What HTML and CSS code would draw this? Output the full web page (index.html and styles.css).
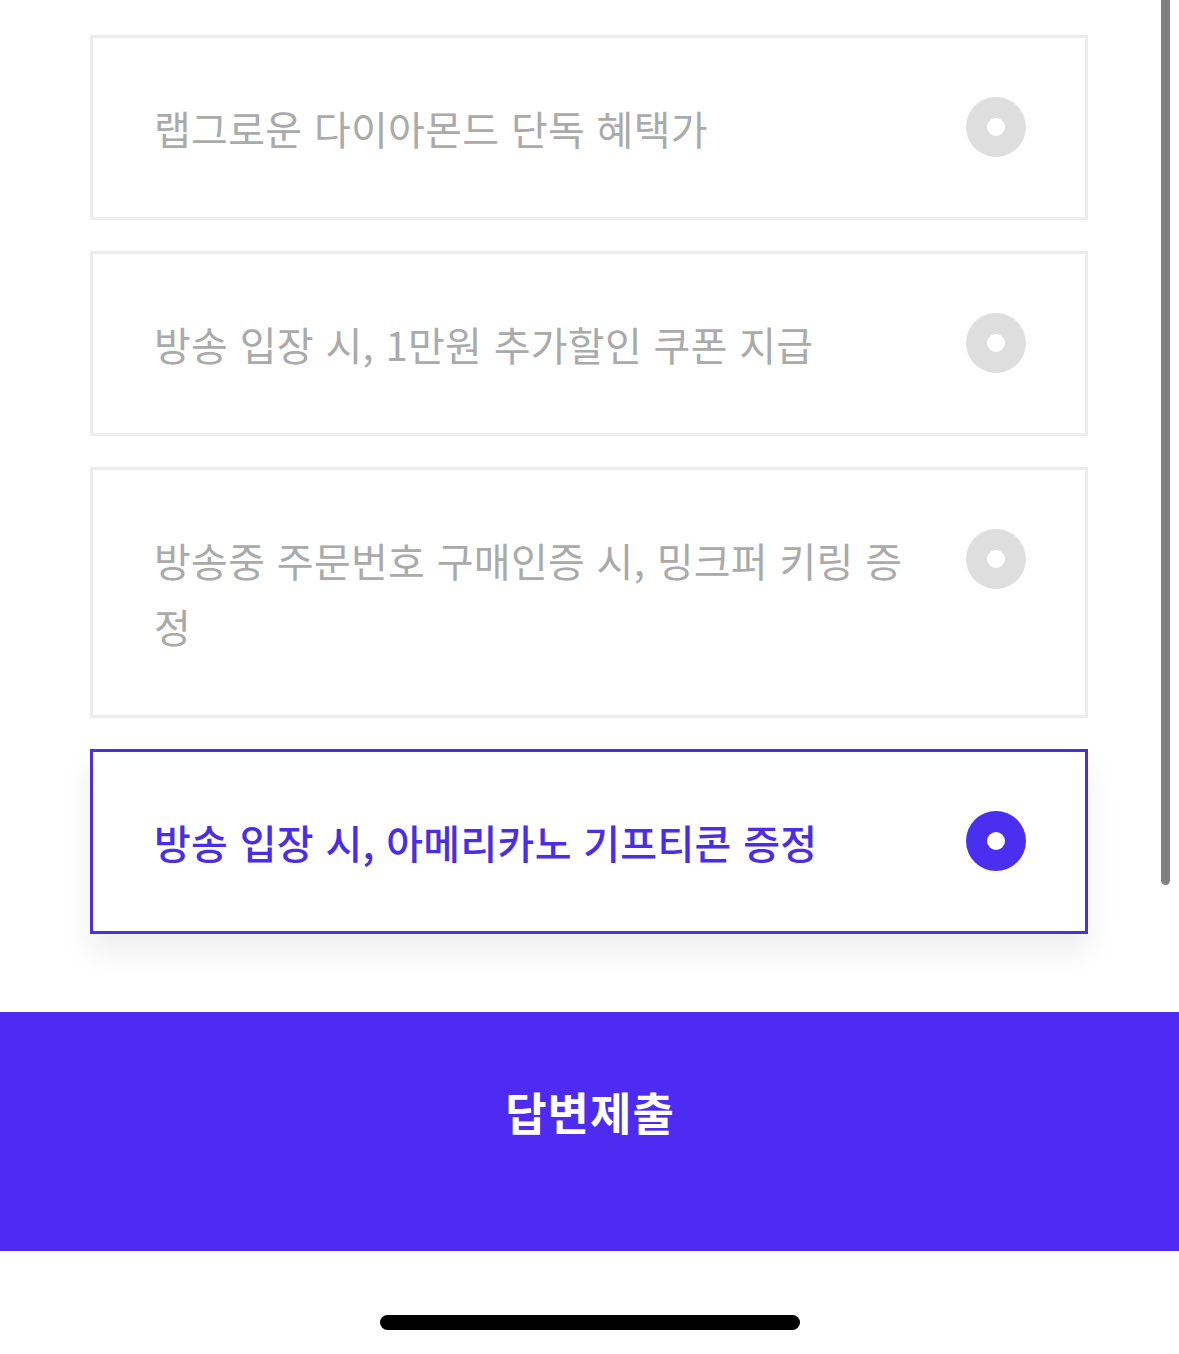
FILE: index.html
```html
<!DOCTYPE html>
<html lang="ko">
<head>
<meta charset="utf-8">
<title>답변제출</title>
<link rel="stylesheet" href="styles.css">
</head>
<body>
<div class="page">
  <ul class="options">
    <li class="option">
      <span class="label">랩그로운 다이아몬드 단독 혜택가</span>
      <span class="radio"></span>
    </li>
    <li class="option">
      <span class="label">방송 입장 시, 1만원 추가할인 쿠폰 지급</span>
      <span class="radio"></span>
    </li>
    <li class="option">
      <span class="label">방송중 주문번호 구매인증 시, 밍크퍼 키링 증정</span>
      <span class="radio"></span>
    </li>
    <li class="option selected">
      <span class="label">방송 입장 시, 아메리카노 기프티콘 증정</span>
      <span class="radio"></span>
    </li>
  </ul>
  <button class="submit">답변제출</button>
  <div class="home-area"><div class="home-indicator"></div></div>
</div>
<div class="scrollbar"></div>
</body>
</html>
```
FILE: styles.css
```css
html, body {
  margin: 0;
  padding: 0;
  background: #ffffff;
}
body {
  font-family: "Noto Sans CJK KR", "Noto Sans", sans-serif;
  width: 1179px;
  height: 1354px;
  overflow: hidden;
  position: relative;
}
.page {
  display: flex;
  flex-direction: column;
}
.options {
  list-style: none;
  margin: 0;
  padding: 35px 91px 0 90px;
  display: flex;
  flex-direction: column;
  gap: 31px;
}
.option {
  display: flex;
  align-items: flex-start;
  border: 3px solid #ececec;
  background: #fff;
  padding: 57px 59px 56px 61px;
}
.label {
  flex: 1;
  font-size: 40px;
  line-height: 66px;
  letter-spacing: 0.3px;
  color: #aaaaaa;
  font-weight: 400;
  padding-right: 40px;
}
.radio {
  flex: none;
  width: 60px;
  height: 60px;
  margin-top: 2px;
  border-radius: 50%;
  background: #dedede;
  display: flex;
  align-items: center;
  justify-content: center;
}
.radio::after {
  content: "";
  width: 18px;
  height: 18px;
  border-radius: 50%;
  background: #fff;
}
.option.selected {
  border-color: #4b31dc;
  box-shadow: 0 18px 30px rgba(0, 0, 0, 0.07);
}
.option.selected .label {
  color: #4a2de6;
  font-weight: 500;
}
.option.selected .radio {
  background: #4a2ff0;
}
.submit {
  margin-top: 78px;
  height: 239px;
  border: 0;
  background: #4d2bf3;
  color: #fff;
  font-family: "Noto Sans CJK KR", "Noto Sans", sans-serif;
  font-size: 45px;
  font-weight: 700;
  letter-spacing: 1px;
  padding: 0 0 40px 1px;
}
.home-area {
  height: 103px;
  display: flex;
  justify-content: center;
  align-items: flex-start;
}
.home-indicator {
  margin-top: 64px;
  width: 420px;
  height: 15px;
  border-radius: 8px;
  background: #000;
}
.scrollbar {
  position: absolute;
  top: 0;
  left: 1161px;
  width: 9px;
  height: 885px;
  border-radius: 0 0 5px 5px;
  background: #808080;
}
```
